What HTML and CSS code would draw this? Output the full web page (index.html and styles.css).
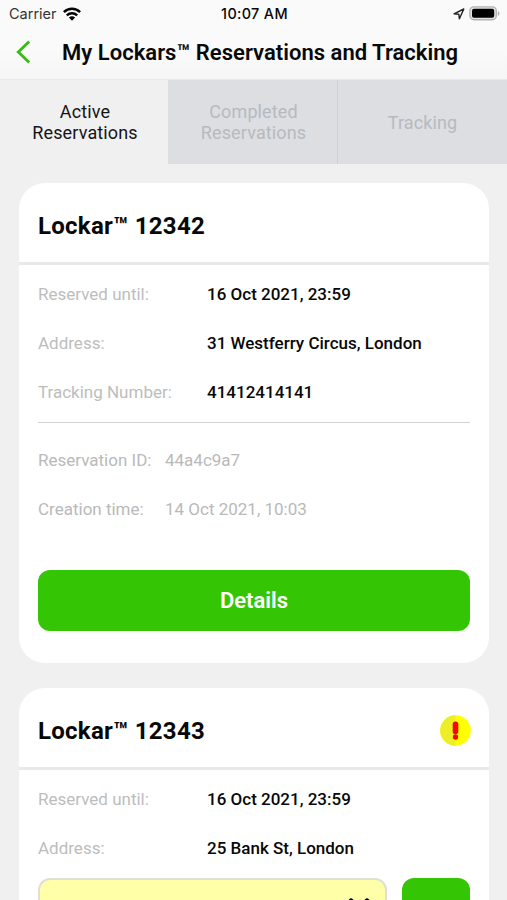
FILE: index.html
```html
<!DOCTYPE html>
<html lang="en">
<head>
<meta charset="utf-8">
<title>My Lockars</title>
<link rel="stylesheet" href="styles.css">
</head>
<body>
<header class="header">
  <div class="status">
    <div class="carrier"><span>Carrier</span>
      <svg width="18" height="14" viewBox="0 0 18 14"><g fill="none" stroke="#050505" stroke-width="2.5"><path d="M.9 5.2C5.5.7 12.5.7 17.1 5.2"/><path d="M3.8 8.3c3-2.8 7.4-2.8 10.4 0"/></g><path d="M9 13.7 5.9 10.5c1.8-1.6 4.4-1.6 6.2 0z" fill="#050505"/></svg>
    </div>
    <div class="time">10:07 AM</div>
    <div class="indicators">
      <svg width="12" height="12" viewBox="0 0 12 12"><path d="M1 5.8 10.8 1 6.4 10.8 5.8 6.2z" fill="none" stroke="#222" stroke-width="1.4" stroke-linejoin="round"/></svg>
      <svg width="31" height="15" viewBox="0 0 31 15"><rect x=".9" y=".9" width="26.4" height="12.8" rx="4" fill="#e2e2e2" stroke="#b2b2b2" stroke-width="1.4"/><rect x="3" y="2.8" width="22.2" height="9" rx="2" fill="#000"/><path d="M28.8 5c2.3.8 2.3 4 0 4.8z" fill="#b2b2b2"/></svg>
    </div>
  </div>
  <div class="nav">
    <svg class="back" width="16" height="24" viewBox="0 0 16 24"><path d="M13.2 1.5 2.3 12l10.9 10.4" fill="none" stroke="#36bd14" stroke-width="2.8"/></svg>
    <h1>My Lockars™ Reservations and Tracking</h1>
  </div>
</header>
<nav class="tabs">
  <div class="tab active">Active<br>Reservations</div>
  <div class="tab">Completed<br>Reservations</div>
  <div class="tab">Tracking</div>
</nav>
<main>
  <section class="card">
    <div class="card-head"><h2>Lockar™ 12342</h2></div>
    <div class="card-body">
      <div class="row"><span class="label">Reserved until:</span><span class="value">16 Oct 2021, 23:59</span></div>
      <div class="row"><span class="label">Address:</span><span class="value">31 Westferry Circus, London</span></div>
      <div class="row"><span class="label">Tracking Number:</span><span class="value">41412414141</span></div>
      <div class="meta">
        <div class="row"><span class="label">Reservation ID:</span><span>44a4c9a7</span></div>
        <div class="row"><span class="label">Creation time:</span><span>14 Oct 2021, 10:03</span></div>
      </div>
      <div class="button">Details</div>
    </div>
  </section>
  <section class="card last">
    <div class="card-head"><h2>Lockar™ 12343</h2>
      <svg width="31" height="31" viewBox="0 0 31 31"><circle cx="15.5" cy="15.5" r="15.3" fill="#ff0"/><path d="M15.5.2a15.3 15.3 0 0 0 0 30.6z" fill="#eeee28"/><path d="M15.5 9.3v7.2" stroke="#fa0505" stroke-width="5.6" stroke-linecap="round"/><circle cx="15.5" cy="22" r="2.7" fill="#fa0505"/></svg>
    </div>
    <div class="card-body">
      <div class="row"><span class="label">Reserved until:</span><span class="value">16 Oct 2021, 23:59</span></div>
      <div class="row"><span class="label">Address:</span><span class="value">25 Bank St, London</span></div>
      <div class="actions">
        <div class="notice"><svg width="24" height="24" viewBox="0 0 24 24"><path d="m4 4 16 16M20 4 4 20" stroke="#000" stroke-width="5" stroke-linecap="round"/></svg></div>
        <div class="action"></div>
      </div>
    </div>
  </section>
</main>
</body>
</html>
```

FILE: styles.css
```css
* { box-sizing: border-box; }
html { height: 100%; overflow: hidden; }
body { margin: 0; height: 900px; overflow: hidden; display: flex; flex-direction: column; background: #f0f0f0; font-family: Roboto, "Liberation Sans", sans-serif; color: #080808; }
svg { display: block; flex: none; }
h1, h2 { margin: 0; white-space: nowrap; }
.header { flex: none; height: 79px; background: linear-gradient(#fafafa 60%, #f6f6f6); }
.status { height: 27px; display: grid; grid-template-columns: 1fr auto 1fr; align-items: center; padding: 0 7px 0 9px; font-family: Inter, sans-serif; font-size: 14.5px; }
.carrier { display: flex; align-items: center; gap: 6px; color: #333; }
.time { font-weight: 500; font-size: 14.4px; letter-spacing: .35px; }
.indicators { display: flex; align-items: center; justify-content: flex-end; gap: 4px; }
.nav { height: 50px; display: flex; align-items: center; padding-left: 16px; }
h1 { margin: 2px 0 0 30px; font-size: 22px; font-weight: 600; line-height: 26px; letter-spacing: .03px; }
.tabs { flex: none; height: 85px; display: grid; grid-template-columns: 168px 170px 169px; border-top: 1px solid #e7e8ea; }
.tab { display: flex; align-items: center; justify-content: center; text-align: center; background: #dcdee2; color: #b6babf; font-size: 18px; line-height: 21px; letter-spacing: .13px; border-right: 1px solid #cdd0d4; padding-left: 2px; }
.tab:last-child { border-right: 0; padding-left: 0; }
.tab.active { background: none; color: #151515; border: 0; }
main { flex: 1; min-height: 0; overflow: hidden; padding: 19px 18px 0 19px; }
.card { height: 480px; margin-bottom: 25px; border-radius: 26px; background: #fff; overflow: hidden; }
.card.last { height: 212px; margin-bottom: 0; border-radius: 26px 26px 0 0; }
.card-head { height: 82px; padding: 6px 18px 0 19px; display: flex; align-items: center; justify-content: space-between; border-bottom: 3px solid #e9e9e9; }
h2 { font-size: 24px; line-height: 28px; font-weight: 700; letter-spacing: .27px; }
.card-body { padding: 5px 19px 0; }
.row { height: 49px; display: flex; align-items: center; font-size: 17px; line-height: 21px; }
.label { width: 169px; color: #bdbdbd; }
.value { font-weight: 500; }
.meta { margin-top: 5px; padding-top: 13px; border-top: 1px solid #d3d3d3; color: #b9b9b9; }
.meta .label { width: 127px; color: #b9b9b9; }
.button { height: 61px; margin-top: 36px; border-radius: 12px; background: #34c604; color: #fff; font-size: 22px; font-weight: 600; display: flex; align-items: center; justify-content: center; }
.actions { display: flex; gap: 15px; margin-top: 5px; height: 22px; overflow: hidden; }
.notice { height: 61px; flex: 1; border: 2px solid #dfdfd4; border-radius: 12px; background: #ffffa8; display: flex; align-items: center; justify-content: flex-end; padding-right: 14px; }
.action { width: 68px; height: 61px; border-radius: 12px; background: #34c604; }
```
